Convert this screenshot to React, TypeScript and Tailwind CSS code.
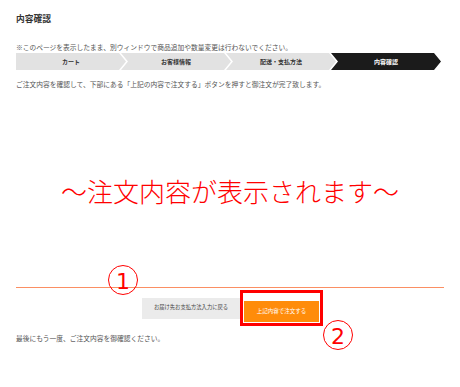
import clsx from "clsx";

const steps = ["カート", "お客様情報", "配送・支払方法", "内容確認"];

function Circled({ n, className }: { n: string; className: string }) {
  // annotation marks drawn over the page
  return (
    <div
      className={clsx(
        "absolute flex h-[30px] w-[30px] items-center justify-center rounded-full border-[1.5px] border-[#ff0000]",
        className
      )}
    >
      <span className="pt-[3px] font-['DejaVu_Sans',sans-serif] text-[22px] leading-none text-[#ff0000]">{n}</span>
    </div>
  );
}

export default function App() {
  return (
    <div className="relative h-[387px] w-[460px] overflow-hidden bg-white font-['Noto_Sans_CJK_JP',sans-serif] text-[#555]">
      <div className="px-4">
        <h1 className="pt-[13px] text-[8.75px] font-bold leading-[12px] text-[#333]">内容確認</h1>
        <p className="mt-[18px] whitespace-nowrap text-[6.75px] leading-[8px]">
          ※このページを表示したまま、別ウィンドウで商品追加や数量変更は行わないでください。
        </p>
        <div className="mt-[2px] flex h-[17px] w-[425px]">
          {steps.map((s, i) => (
            <div
              key={s}
              className={clsx(
                "flex w-[110px] shrink-0 items-center justify-center text-[6px] font-bold leading-none",
                i === 3 ? "bg-[#1b1b1b] text-white" : "bg-[#e2e2e2] text-[#333]",
                i > 0 && "-ml-[5px]",
                i === 0
                  ? "[clip-path:polygon(0_0,calc(100%_-_7px)_0,100%_50%,calc(100%_-_7px)_100%,0_100%)]"
                  : "[clip-path:polygon(0_0,calc(100%_-_7px)_0,100%_50%,calc(100%_-_7px)_100%,0_100%,7px_50%)]"
              )}
            >
              {s}
            </div>
          ))}
        </div>
        <p className="mt-[10px] whitespace-nowrap text-[6.75px] leading-[8px]">
          ご注文内容を確認して、下部にある「上記の内容で注文する」ボタンを押すと御注文が完了致します。
        </p>
      </div>

      <div className="flex h-[199px] items-center justify-center pt-[6px]">
        <span className="whitespace-nowrap text-[26px] font-light leading-none text-[#ff0000]">～注文内容が表示されます～</span>
      </div>
      <div className="mx-4 h-px bg-[#fb8f63]" />

      <div className="mt-[2px] flex items-center justify-center pl-[5px]">
        <button className="h-[21px] w-[98px] bg-[#ebebeb] text-[5.3px] leading-none text-[#444]">お届け先お支払方法入力に戻る</button>
        <div className="border-[3px] border-[#ff0000] p-px">
          <button className="h-[21px] w-[75px] bg-[#ff8c0a] text-[5.5px] leading-none text-white">上記内容で注文する</button>
        </div>
      </div>

      <p className="mt-[8px] px-4 whitespace-nowrap text-[6.75px] leading-[8px]">最後にもう一度、ご注文内容を御確認ください。</p>

      <Circled n="1" className="left-[108px] top-[265px]" />
      <Circled n="2" className="left-[323px] top-[320px]" />
    </div>
  );
}
